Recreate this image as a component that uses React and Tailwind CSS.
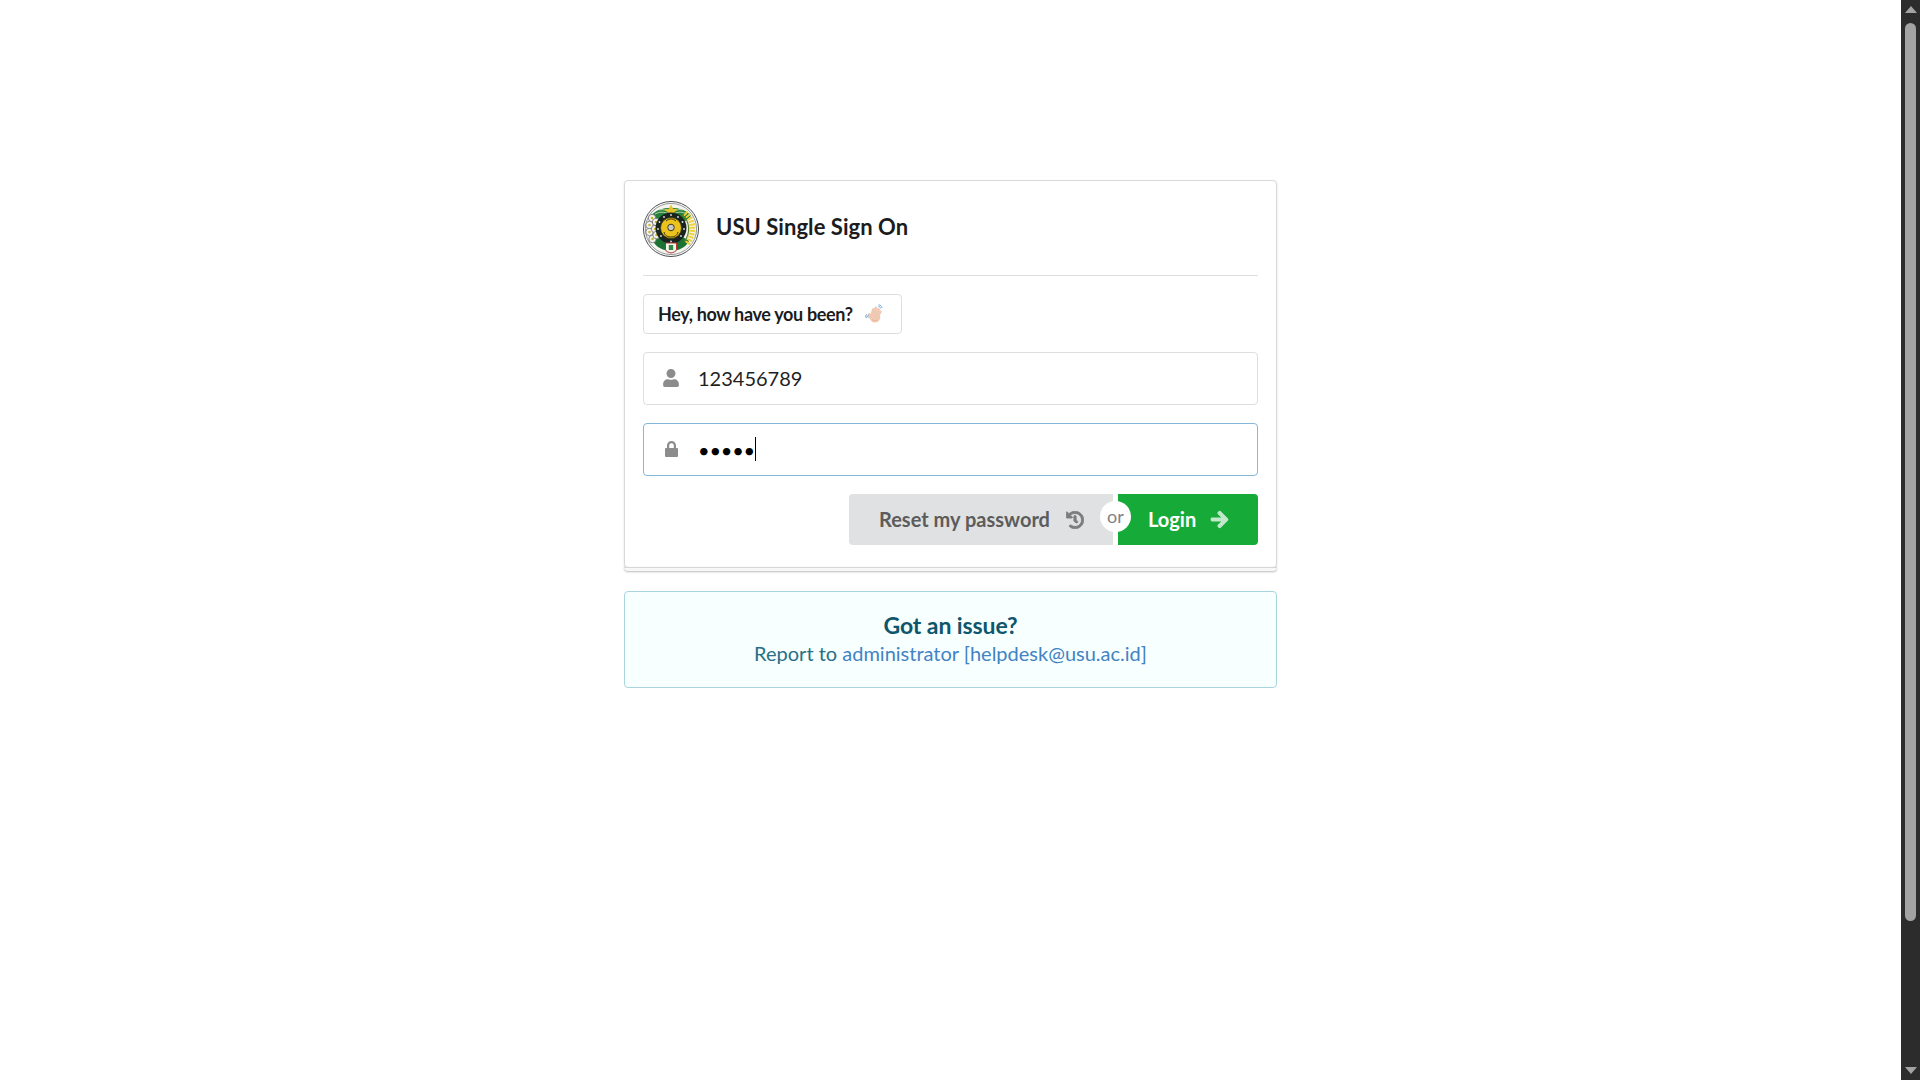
import React from 'react';
import { FaUser, FaHistory, FaArrowRight } from 'react-icons/fa';

const UsuLogo = () => (
  <svg viewBox="0 0 56 56" className="w-14 h-14 shrink-0">
    <circle cx="28" cy="28" r="27.5" fill="#fff" stroke="#4a4d4f" strokeWidth="1" />
    <circle cx="28" cy="28" r="25.6" fill="#f4f5ef" stroke="#7d8082" strokeWidth="0.8" />
    {/* green leaves */}
    <path d="M8 15C15 4 41 4 48 15L40 22C34 14 22 14 16 22Z" fill="#23803a" />
    <path d="M10 40C16 53 40 53 46 40L37 34C33 42 23 42 19 34Z" fill="#1a7233" />
    <path d="M12 13C18 10 23 11 27 14M44 13C38 10 33 11 29 14M16 9C20 8 24 9 27 12M40 9C36 8 32 9 29 12" stroke="#dfe6c0" strokeWidth="0.8" fill="none" />
    {/* star */}
    <path d="M28 3.500l2 4.300 4.700.5-3.500 3.100 1 4.600-4.200-2.400-4.200 2.400 1-4.600-3.500-3.100 4.700-.5z" fill="#e6c22a" />
    {/* flowers */}
    {[[9, 17], [6.500, 24], [6.500, 31], [9.500, 38], [13, 21], [12, 28], [13.500, 34]].map(([x, y]) => (
      <g key={`${x}-${y}`}>
        <circle cx={x} cy={y} r="3.700" fill="#f5f5f0" stroke="#6f7172" strokeWidth="0.8" />
        <circle cx={x} cy={y} r="1.300" fill="#cdb52f" />
      </g>
    ))}
    {/* paddy */}
    <path d="M42 12C51 19 52 32 44 43" stroke="#ecd43a" strokeWidth="5.500" strokeDasharray="2 1.200" fill="none" />
    <path d="M39 14C47 20 48 32 41 41" stroke="#5d7f2b" strokeWidth="1.200" fill="none" />
    {/* medallion */}
    <circle cx="28" cy="27" r="15.500" fill="#17241f" />
    <circle cx="28" cy="27" r="10.500" fill="#ecc31c" stroke="#3e3710" strokeWidth="0.8" />
    <circle cx="28" cy="26.500" r="3.300" fill="#c9c9c2" stroke="#3b3b20" strokeWidth="1" />
    <path d="M23 20a7 7 0 0 1 10 0M21 31c1 4 4 5 7 5s6-1 7-5" stroke="#3c3410" strokeWidth="1" fill="none" />
    {[[28, 14], [21, 16], [35, 16], [16.500, 21], [39.500, 21], [15, 28], [41, 28], [18, 35], [38, 35], [28, 40.500]].map(([x, y]) => (
      <circle key={`${x}:${y}`} cx={x} cy={y} r="0.900" fill="#e4e4e4" />
    ))}
    {/* shield */}
    <path d="M22.500 42h11v6.500c0 2-3.500 3-5.500 3.500-2-.5-5.500-1.500-5.500-3.500Z" fill="#f6f6f0" stroke="#b5322e" strokeWidth="1" />
    <path d="M25.800 44h4.400v5h-4.400z" fill="#2f8a44" />
  </svg>
);

const WaveHand = () => (
  <svg viewBox="0 0 20 20" className="w-5 h-5 shrink-0">
    <g stroke="#f0c9b3" strokeWidth="2.800" strokeLinecap="round" fill="none">
      <path d="M7.500 11 9.500 5.500" />
      <path d="M9.800 10 12 4" />
      <path d="M12 10.500 14.500 5.500" />
      <path d="M14 11.500 16.300 8" />
      <path d="M6.500 13.500 5 10.500" />
    </g>
    <circle cx="11" cy="13.300" r="5.300" fill="#f0c9b3" />
    <path d="M8 15.500c1.500 1.500 4 1.500 5.500.3" stroke="#e2ad93" strokeWidth="0.700" fill="none" />
    <path d="M2.300 10.800c-.7 1-.7 2 0 3M3.900 11.700c-.4.500-.4 1 0 1.500" stroke="#4f92d8" strokeWidth="1" fill="none" strokeLinecap="round" />
    <path d="M14.500 2.200c1 .1 1.800.8 2 1.800M15 .8c1.500.2 2.700 1.300 3 2.800" stroke="#6ba6e2" strokeWidth="0.900" fill="none" strokeLinecap="round" />
  </svg>
);

// narrower than the fa lock, taller shackle
const LockIcon = () => (
  <svg viewBox="0 0 13 16" className="w-[13px] h-4 fill-current">
    <path d="M2 7V4.500a4.500 4.500 0 0 1 9 0V7h1a1 1 0 0 1 1 1v7a1 1 0 0 1-1 1H1a1 1 0 0 1-1-1V8a1 1 0 0 1 1-1Zm2.200 0h4.600V4.500a2.300 2.300 0 0 0-4.600 0Z" />
  </svg>
);

const Field = ({ icon, focused, children }) => (
  <div
    className={`flex items-center h-[53px] pb-[2px] border rounded-[4px] bg-white ${
      focused ? 'border-[#85b7d9]' : 'border-[#dedede]'
    }`}
  >
    <span className="w-[54px] flex justify-center text-[#8c8c8c]">{icon}</span>
    <div className="flex items-center text-[20px] text-[#1f1f1f]">{children}</div>
  </div>
);

const Scrollbar = () => (
  <aside className="w-[19px] shrink-0 h-full bg-[#2c2c2c] flex flex-col items-center justify-between py-[6px]">
    <div className="flex flex-col items-center w-full">
      <span className="w-0 h-0 border-x-[6px] border-x-transparent border-b-[7px] border-b-[#a3a3a3]" />
      <span className="w-[11px] h-[898px] mt-[10px] rounded-full bg-[#a3a3a3]" />
    </div>
    <span className="w-0 h-0 border-x-[6px] border-x-transparent border-t-[7px] border-t-[#a3a3a3]" />
  </aside>
);

export default function App() {
  return (
    <div className="flex h-screen overflow-hidden bg-white font-['Lato','Noto_Sans',sans-serif]">
      <main className="flex-1 flex flex-col items-center pt-[180px]">
        <section className="relative w-[653px] border border-[#d9d9da] rounded-[4px] bg-white px-[18px] pt-[20px] pb-[22px] shadow-[0_1px_2px_0_rgba(34,36,38,0.15)] after:content-[''] after:absolute after:bottom-[-4px] after:left-[-1px] after:w-[653px] after:h-[4px] after:rounded-b-[4px] after:border-t after:border-[rgba(34,36,38,0.15)] after:bg-[#f7f7f7] after:shadow-[0_1px_2px_0_rgba(34,36,38,0.3)]">
          <header className="flex items-center gap-[17px] pb-[18px] border-b border-[#dedede]">
            <UsuLogo />
            <h1 className="text-[22px] leading-[28px] font-bold text-[#1b1c1d] tracking-[0.05px] mb-[5px]">
              USU Single Sign On
            </h1>
          </header>

          <div className="inline-flex items-center gap-[11px] mt-[18px] h-[40px] pl-[14px] pr-[17px] border border-[#dedede] rounded-[4px] text-[18px] font-bold text-[#1b1c1d] tracking-[-0.34px]">
            Hey, how have you been?
            <WaveHand />
          </div>

          <div className="flex flex-col gap-[18px] mt-[18px]">
            <Field icon={<FaUser className="text-[18px]" />}>123456789</Field>
            <Field icon={<LockIcon />} focused>
              <span className="block h-[24px] leading-[26px] border-r border-black text-black tracking-[-0.2px]">
                •••••
              </span>
            </Field>
          </div>

          <div className="relative flex justify-end gap-[5px] mt-[18px] h-[51px] text-[20px] font-bold">
            <button className="flex items-center gap-[16px] w-[264px] pl-[30px] pb-[2px] rounded-l-[4px] bg-[#e0e1e2] text-[#5c5c5c]">
              Reset my password
              <FaHistory className="text-[18px] text-[#7d7d7d] mt-[2px]" stroke="currentColor" strokeWidth="24" />
            </button>
            <button className="flex items-center gap-[14px] w-[140px] pl-[30px] pb-[2px] rounded-r-[4px] bg-[#16ab39] text-white">
              Login
              <FaArrowRight className="text-[19px] text-[#c4e8cc] mt-[2px]" stroke="currentColor" strokeWidth="30" />
            </button>
            <span className="absolute right-[127px] top-[7px] w-[31px] h-[31px] rounded-full bg-white flex items-center justify-center text-[18px] font-normal text-[#7f8286]">
              or
            </span>
          </div>
        </section>

        <section className="w-[653px] h-[97px] mt-[23px] border border-[#a9d5de] rounded-[4px] bg-[#f8ffff] flex flex-col items-center pt-[19px] text-center">
          <h2 className="text-[23px] leading-[28px] font-bold text-[#0e566c] tracking-[-0.1px]">Got an issue?</h2>
          <p className="text-[20px] leading-[28px] text-[#276f86]">
            Report to <a className="text-[#4183c4]">administrator [helpdesk@usu.ac.id]</a>
          </p>
        </section>
      </main>
      <Scrollbar />
    </div>
  );
}
